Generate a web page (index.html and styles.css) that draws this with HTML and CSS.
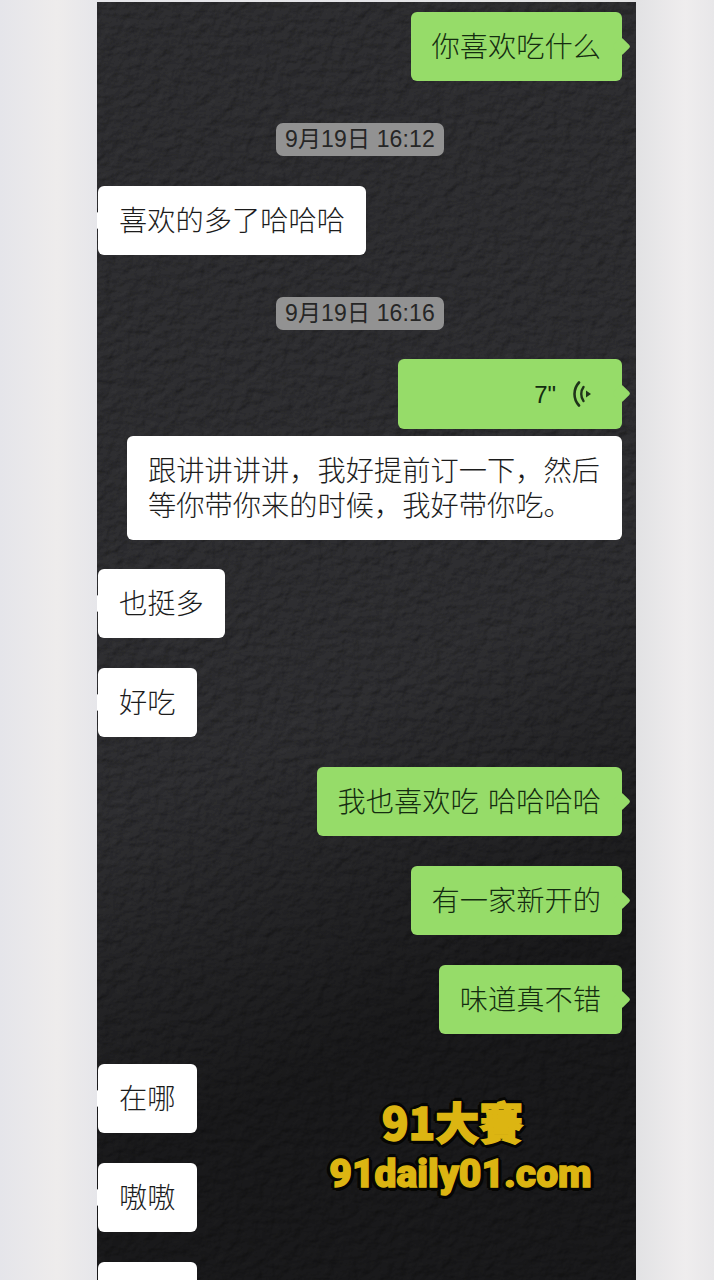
FILE: index.html
```html
<!DOCTYPE html>
<html lang="zh-CN">
<head>
  <meta charset="UTF-8">
  <meta name="viewport" content="width=device-width, initial-scale=1.0">
  <title>聊天记录</title>
  <link rel="stylesheet" href="styles.css">
</head>
<body>
  <div class="phone">
    <!-- leather wallpaper -->
    <svg class="wallpaper" width="539" height="1278" aria-hidden="true">
      <defs>
        <filter id="leather" x="0" y="0" width="100%" height="100%">
          <feTurbulence type="fractalNoise" baseFrequency="0.085 0.1" numOctaves="3" seed="11"/>
          <feDiffuseLighting surfaceScale="2" diffuseConstant="1" lighting-color="#363638">
            <feDistantLight azimuth="235" elevation="55"/>
          </feDiffuseLighting>
        </filter>
        <linearGradient id="shade" x1="0" y1="0" x2="0.2" y2="1">
          <stop offset="0" stop-color="#000" stop-opacity="0.08"/>
          <stop offset="0.62" stop-color="#000" stop-opacity="0.08"/>
          <stop offset="0.88" stop-color="#000" stop-opacity="0.5"/>
          <stop offset="1" stop-color="#000" stop-opacity="0.5"/>
        </linearGradient>
      </defs>
      <rect width="539" height="1278" filter="url(#leather)"/>
      <rect width="539" height="1278" fill="url(#shade)"/>
    </svg>

    <div class="chat">
      <div class="msg me">你喜欢吃什么</div>
      <div class="time">9月19日 16:12</div>
      <div class="msg other">喜欢的多了哈哈哈</div>
      <div class="time time-tight">9月19日 16:16</div>
      <div class="msg me voice">
        <span class="secs">7"</span>
        <svg class="voice-icon" width="18" height="26" viewBox="0 0 18 26">
          <path d="M6 1.5C0 8 0 18 6 24.5" fill="none" stroke="#1f331a" stroke-width="2.6" stroke-linecap="round"/>
          <path d="M10.5 6C7.5 10 7.5 16 10.5 20" fill="none" stroke="#1f331a" stroke-width="2.4" stroke-linecap="round"/>
          <path d="M13 9.5L18 13L13 16.5Z" fill="#1f331a"/>
        </svg>
      </div>
      <div class="msg reply">跟讲讲讲讲，我好提前订一下，然后<br>等你带你来的时候，我好带你吃。</div>
      <div class="msg other">也挺多</div>
      <div class="msg other">好吃</div>
      <div class="msg me">我也喜欢吃 哈哈哈哈</div>
      <div class="msg me">有一家新开的</div>
      <div class="msg me">味道真不错</div>
      <div class="msg other">在哪</div>
      <div class="msg other">嗷嗷</div>
      <div class="msg other blank"></div>
    </div>

    <div class="watermark">
      <div class="wm-title">91大賽</div>
      <div class="wm-url">91daily01.com</div>
    </div>
  </div>
</body>
</html>
```

FILE: styles.css
```css
html, body {
  height: 1280px;
  overflow: hidden;
}
body {
  margin: 0;
  padding-top: 2px;
  box-sizing: border-box;
  background: linear-gradient(90deg, #e5e5ea 0, #eeecec 8%, #e6e6ea 13.6%, #e2e2e4 89.1%, #efedee 96%, #e8e7e9 100%);
  font-family: "Noto Sans CJK SC", "Noto Sans", sans-serif;
}
.phone {
  position: relative;
  width: 539px;
  height: 1278px;
  margin-left: 97px;
  background: #1d1d1d;
  overflow: hidden;
}
.wallpaper {
  position: absolute;
  top: 0;
  left: 0;
}
.chat {
  position: relative;
  display: flex;
  flex-direction: column;
  align-items: flex-start;
  padding: 10px 14px 0 1px;
}
.msg {
  position: relative;
  padding: 15px 21px 19px;
  margin-bottom: 30px;
  font-size: 28.25px;
  line-height: 35px;
  font-weight: 300;
  word-spacing: 3px;
  white-space: nowrap;
  border-radius: 6px;
}
.msg::after {
  content: "";
  position: absolute;
  top: 28px;
  width: 13px;
  height: 13px;
  transform: rotate(45deg);
  background: inherit;
  border-radius: 2px;
}
.me {
  align-self: flex-end;
  background: #96dc69;
  color: #142c10;
}
.me::after {
  right: -6px;
}
.other {
  background: #fff;
  color: #1c1c1c;
}
.other::after {
  left: -8px;
}
.blank {
  width: 57px;
  height: 35px;
}
.time {
  align-self: center;
  margin: 12px 0 30px;
  padding: 0 9px;
  height: 33px;
  line-height: 33px;
  font-size: 23px;
  letter-spacing: 0.15px;
  font-family: "Liberation Sans", "Noto Sans CJK SC", sans-serif;
  color: #262626;
  background: #929292;
  border-radius: 7px;
  white-space: nowrap;
}
.time-tight {
  margin-bottom: 29px;
}
.voice {
  display: flex;
  justify-content: flex-end;
  align-items: center;
  gap: 17px;
  width: 224px;
  box-sizing: border-box;
  height: 70px;
  padding: 0 31px 0 0;
  margin-bottom: 7px;
  font-family: "Liberation Sans", sans-serif;
  font-size: 24px;
}
.reply {
  align-self: flex-end;
  box-sizing: border-box;
  width: 495px;
  margin-bottom: 29px;
  font-family: "Noto Sans CJK TC", sans-serif;
  background: #fff;
  color: #1c1c1c;
}
.reply::after {
  display: none;
}
.watermark {
  position: absolute;
  top: 1089px;
  left: 231px;
  width: 265px;
  text-align: center;
  color: #dcb512;
  font-weight: 900;
  -webkit-text-stroke: 1.4px #dcb512;
  text-shadow: 3px 0 0 #060604, -3px 0 0 #060604, 0 3px 0 #060604, 0 -3px 0 #060604,
    2.5px 2.5px 0 #060604, -2.5px 2.5px 0 #060604, 2.5px -2.5px 0 #060604, -2.5px -2.5px 0 #060604,
    4px 1px 0 #060604, -4px 1px 0 #060604, 1px 4px 0 #060604, 1px -4px 0 #060604;
}
.wm-title {
  padding-right: 16px;
  font-family: "Noto Sans CJK TC", sans-serif;
  font-size: 44px;
  line-height: 60px;
}
.wm-url {
  font-family: Roboto, sans-serif;
  font-size: 39px;
  line-height: 46px;
  white-space: nowrap;
}
```
